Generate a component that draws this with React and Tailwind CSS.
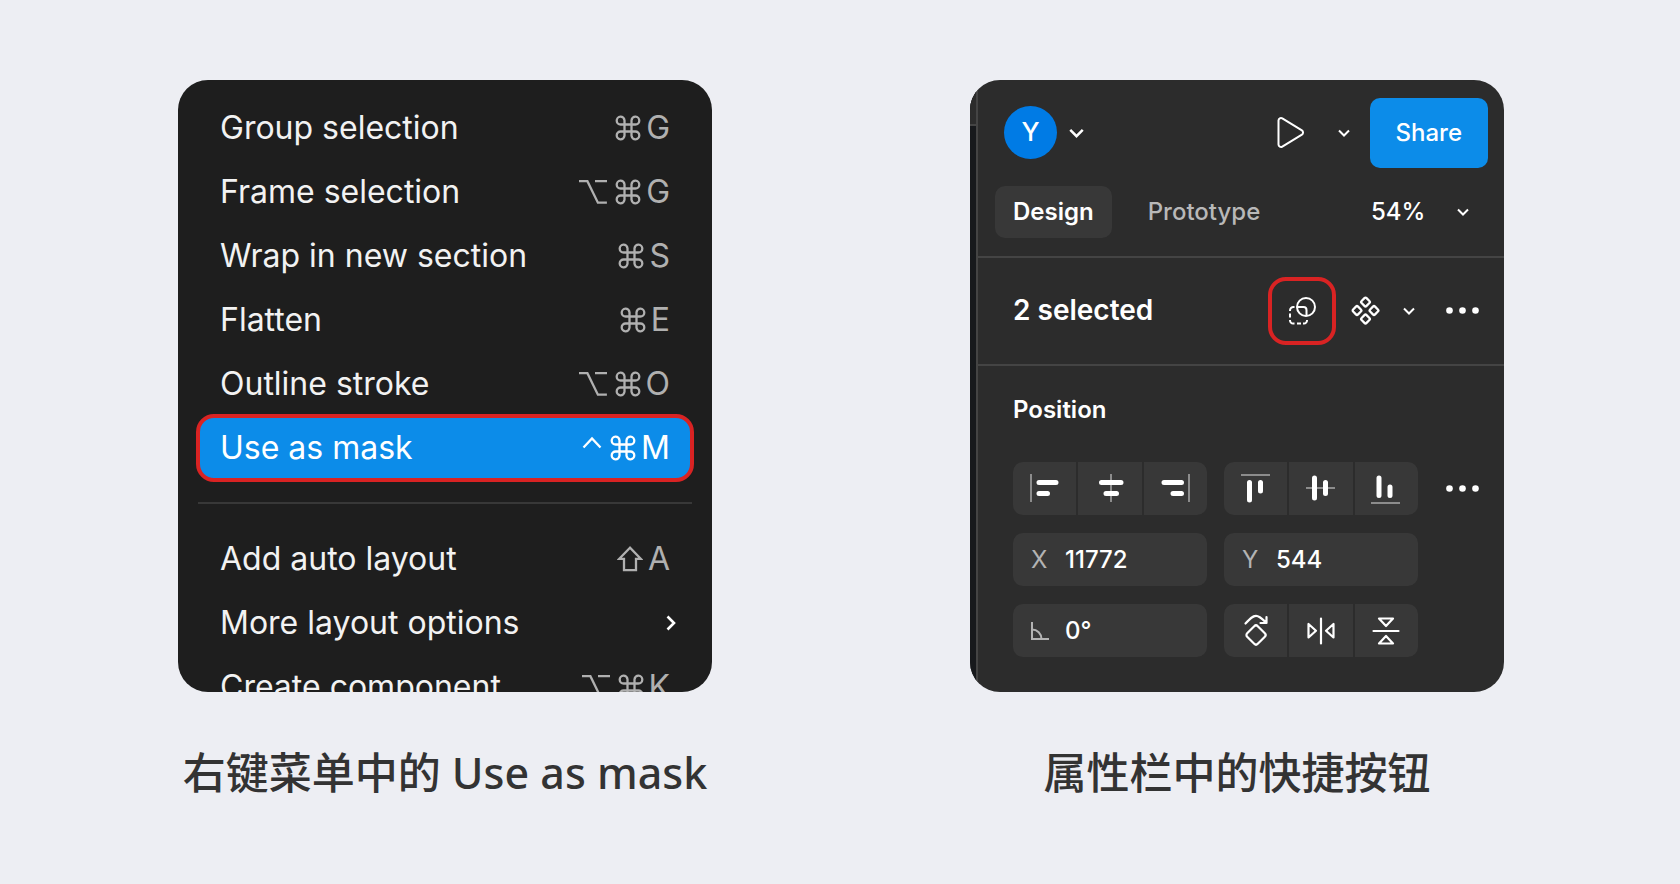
import React, { useState } from 'react';
import clsx from 'clsx';

const MENU_TOP = [
  { label: 'Group selection', keys: ['⌘', 'G'] },
  { label: 'Frame selection', keys: ['⌥', '⌘', 'G'] },
  { label: 'Wrap in new section', keys: ['⌘', 'S'] },
  { label: 'Flatten', keys: ['⌘', 'E'] },
  { label: 'Outline stroke', keys: ['⌥', '⌘', 'O'] },
  { label: 'Use as mask', keys: ['⌃', '⌘', 'M'], active: true },
];

const MENU_BOTTOM = [
  { label: 'Add auto layout', keys: ['⇧', 'A'] },
  { label: 'More layout options', submenu: true },
  { label: 'Create component', keys: ['⌥', '⌘', 'K'], clipped: true },
];

// guide = thin grey line, bars = thick white strokes
const ALIGN_X = [
  { name: 'Align left', guide: 'M1 0v28', bars: 'M9 8.5h17M9 19.5h8.5' },
  { name: 'Align horizontal centers', guide: 'M16 0v28', bars: 'M6.5 8.5h19.5M11 19.5h10.5' },
  { name: 'Align right', guide: 'M29 0v28', bars: 'M4 8.5h17.5M13 19.5h8.5' },
];

const ALIGN_Y = [
  { name: 'Align top', guide: 'M0 1h29', bars: 'M8.5 8.5v17.5M19.5 8.5v8.5' },
  { name: 'Align vertical centers', guide: 'M0 14h29', bars: 'M8.5 4v20M19.5 8.5v11' },
  { name: 'Align bottom', guide: 'M0 29h29', bars: 'M8 4v17.5M19 13v8.5' },
];

function KeyGlyph({ name }) {
  const common = {
    viewBox: '0 0 28 26',
    className: 'h-[26px] w-7',
    fill: 'none',
    stroke: 'currentColor',
    strokeWidth: 2.3,
  };
  if (name === '⌘') {
    return (
      <svg {...common} viewBox="0 0 26 26" className="h-[26px] w-[26px]">
        <path d="M9.5 9.500V5.300a3.900 3.900 0 1 0-3.900 4.200h14.800a3.900 3.900 0 1 0-3.900-4.200v15.400a3.900 3.900 0 1 0 3.900-4.200H5.600a3.900 3.900 0 1 0 3.900 4.200z" />
      </svg>
    );
  }
  if (name === '⌥') {
    return (
      <svg {...common}>
        <path d="M0 2.2h8.4l10.5 21.5h9M16 2.2h12" />
      </svg>
    );
  }
  if (name === '⌃') {
    return (
      <svg {...common} viewBox="0 0 20 26" className="h-[26px] w-5">
        <path d="M1.5 12.5l8.500-9 8.500 9" />
      </svg>
    );
  }
  return (
    <svg {...common} viewBox="0 0 26 26" className="h-[26px] w-[26px]">
      <path d="M13 1.7L2.300 12.800h4.700v11.400h12V12.800h4.700z" />
    </svg>
  );
}

function Shortcut({ keys }) {
  return (
    <span className="flex items-center gap-2">
      {keys.map((key) => (
        /[A-Z]/.test(key)
          ? <span key={key} className="-ml-[3px]">{key}</span>
          : <KeyGlyph key={key} name={key} />
      ))}
    </span>
  );
}

function MenuItem({ item }) {
  return (
    <li className={clsx(item.clipped && 'h-[37px] overflow-hidden', item.active && '-mt-[2px]')}>
      <button
        type="button"
        className={clsx(
          'flex w-full items-center justify-between text-left text-[32px] leading-10',
          item.active
            ? 'h-[68px] rounded-[18px] border-4 border-[#d92323] bg-[#0c8ce9] px-5 text-white'
            : 'h-16 px-6 text-[#f2f2f2]'
        )}
      >
        <span>{item.label}</span>
        {item.keys && (
          <span className={item.active ? 'text-white' : 'text-[#b0b0b0]'}>
            <Shortcut keys={item.keys} />
          </span>
        )}
        {item.submenu && (
          <svg viewBox="0 0 10 16" className="-mr-[6px] h-4 w-[10px]" fill="none" stroke="white" strokeWidth="2.6">
            <path d="M1.5 1.5L8 8l-6.5 6.5" />
          </svg>
        )}
      </button>
    </li>
  );
}

function ContextMenu() {
  return (
    <div className="overflow-hidden rounded-[30px] bg-[#1e1e1e] px-[18px] pt-4">
      <ul>
        {MENU_TOP.map((item) => <MenuItem key={item.label} item={item} />)}
      </ul>
      <hr className="mx-[2px] mt-5 mb-[23px] border-t-2 border-[#383838]" />
      <ul>
        {MENU_BOTTOM.map((item) => <MenuItem key={item.label} item={item} />)}
      </ul>
    </div>
  );
}

function Chevron({ large }) {
  return (
    <svg
      viewBox="0 0 12 8"
      className={clsx('shrink-0', large ? 'h-[10px] w-[15px]' : 'h-2 w-3')}
      fill="none"
      stroke="currentColor"
      strokeWidth="2"
    >
      <path d="M1 1.5l5 5 5-5" />
    </svg>
  );
}

function Dots() {
  return (
    <svg viewBox="0 0 34 8" className="h-2 w-[34px]" fill="currentColor">
      <circle cx="3.500" cy="3.500" r="3.300" />
      <circle cx="16.500" cy="3.500" r="3.300" />
      <circle cx="29.500" cy="3.500" r="3.300" />
    </svg>
  );
}

function ButtonGroup({ children }) {
  return (
    <div className="flex h-[53px] flex-1 gap-[2px] overflow-hidden rounded-[10px]">
      {children}
    </div>
  );
}

function Cell({ name, children }) {
  return (
    <button type="button" aria-label={name} className="flex flex-1 items-center justify-center bg-[#383838]">
      {children}
    </button>
  );
}

function AlignCell({ item }) {
  return (
    <Cell name={item.name}>
      <svg viewBox="0 0 30 30" className="h-[30px] w-[30px]" fill="none">
        <path d={item.guide} stroke="#8c8c8c" strokeWidth="2" />
        <path d={item.bars} stroke="white" strokeWidth="5" strokeLinecap="round" />
      </svg>
    </Cell>
  );
}

function ActionIcon({ children }) {
  return (
    <svg
      viewBox="0 0 30 34"
      className="h-[34px] w-[30px]"
      fill="none"
      stroke="white"
      strokeWidth="2.2"
      strokeLinecap="round"
      strokeLinejoin="round"
    >
      {children}
    </svg>
  );
}

function Field({ name, icon, value, onChange }) {
  return (
    <label className="flex h-[53px] min-w-0 flex-1 items-center rounded-[10px] bg-[#383838]">
      <span className="flex w-[52px] shrink-0 pl-[18px] text-[#b3b3b3]">{icon}</span>
      <input
        type="text"
        aria-label={name}
        value={value}
        onChange={(e) => onChange(e.target.value)}
        className="w-full min-w-0 bg-transparent font-medium text-white outline-none"
      />
    </label>
  );
}

function PropertiesPanel() {
  const [position, setPosition] = useState({ x: '11772', y: '544', angle: '0°' });
  const update = (key) => (value) => setPosition({ ...position, [key]: value });

  return (
    <div className="flex overflow-hidden rounded-[30px] bg-[#2c2c2c] text-2xl text-white">
      <div className="w-[6px] shrink-0 bg-[#17191c]">
        <div className="h-[46px] border-b-2 border-[#444444] bg-[#2c2c2c]" />
      </div>

      <div className="min-w-0 flex-1 border-l-2 border-[#444444]">
        <div className="flex h-[88px] items-end justify-between pr-4 pl-[26px]">
          <button type="button" aria-label="Account" className="mb-[9px] flex items-center gap-3">
            <span className="flex h-[53px] w-[53px] items-center justify-center rounded-full bg-[#007be5] text-[26px] font-medium">
              Y
            </span>
            <Chevron large />
          </button>
          <div className="flex items-center">
            <button type="button" aria-label="Present">
              <svg viewBox="0 0 28 32" className="h-8 w-7" fill="none" stroke="currentColor" strokeWidth="2">
                <path d="M1.5 3.500v24a2.500 2.500 0 0 0 3.800 2.100l19.600-12a2.500 2.500 0 0 0 0-4.200L5.300 1.400A2.500 2.500 0 0 0 1.500 3.500z" />
              </svg>
            </button>
            <button type="button" aria-label="Present options" className="mr-5 ml-[33px]">
              <Chevron />
            </button>
            <button type="button" className="h-[70px] rounded-[10px] bg-[#0c8ce9] px-[26px] font-medium">
              Share
            </button>
          </div>
        </div>

        <div className="flex items-center border-b-2 border-[#444444] py-[18px] pr-[35px] pl-[17px]">
          <button type="button" className="h-[52px] rounded-[10px] bg-[#383838] px-[18px] font-semibold">
            Design
          </button>
          <button type="button" className="ml-[18px] px-[18px] font-medium text-[#b8b8b8]">Prototype</button>
          <label className="ml-auto flex items-center gap-[31px]">
            <select aria-label="Zoom" className="appearance-none bg-transparent font-medium outline-none">
              <option>54%</option>
            </select>
            <Chevron />
          </label>
        </div>

        <div className="flex h-[108px] items-center border-b-2 border-[#444444] pr-6 pl-[35px]">
          <h2 className="flex-1 text-[28px] font-semibold">2 selected</h2>
          <button
            type="button"
            aria-label="Use as mask"
            className="flex h-[68px] w-[68px] items-center justify-center rounded-[18px] border-4 border-[#d92323]"
          >
            <svg viewBox="0 0 28 28" className="h-7 w-7" fill="none" stroke="currentColor" strokeWidth="2">
              <circle cx="18" cy="10" r="9" />
              <path d="M9 10h6.500a3 3 0 0 1 3 3v6" />
              <path d="M6.500 10h-1a3.500 3.500 0 0 0-3.500 3.500v.5M2 16.500v4M2 23v.5a3 3 0 0 0 3 3h1.500M9 26.500h4M15 26.500h1a3 3 0 0 0 3-3v-.5" />
            </svg>
          </button>
          <button type="button" aria-label="Create component" className="ml-[15px]">
            <svg viewBox="0 0 30 30" className="h-[30px] w-[30px]" fill="none" stroke="currentColor" strokeWidth="2.300">
              {[[14.5, 6], [6, 14.5], [23, 14.5], [14.5, 23]].map(([cx, cy]) => (
                <rect
                  key={`${cx}-${cy}`}
                  x={cx - 3.5}
                  y={cy - 3.5}
                  width="7"
                  height="7"
                  rx="1.500"
                  transform={`rotate(45 ${cx} ${cy})`}
                />
              ))}
            </svg>
          </button>
          <button type="button" aria-label="Component options" className="ml-[22px]">
            <Chevron />
          </button>
          <button type="button" aria-label="More actions" className="ml-[31px]">
            <Dots />
          </button>
        </div>

        <div className="pt-7 pr-6 pb-[35px] pl-[35px]">
          <h3 className="mb-9 leading-8 font-semibold">Position</h3>
          <div className="flex flex-col gap-[18px]">
            <div className="flex items-center gap-[17px]">
              <ButtonGroup>
                {ALIGN_X.map((item) => <AlignCell key={item.name} item={item} />)}
              </ButtonGroup>
              <ButtonGroup>
                {ALIGN_Y.map((item) => <AlignCell key={item.name} item={item} />)}
              </ButtonGroup>
              <button type="button" aria-label="More align options" className="ml-[11px]">
                <Dots />
              </button>
            </div>

            <div className="flex gap-[17px] pr-[62px]">
              <Field name="X position" icon="X" value={position.x} onChange={update('x')} />
              <Field name="Y position" icon="Y" value={position.y} onChange={update('y')} />
            </div>

            <div className="flex gap-[17px] pr-[62px]">
              <Field
                name="Rotation"
                icon={(
                  <svg viewBox="0 0 18 18" className="h-[18px] w-[18px]" fill="none" stroke="currentColor" strokeWidth="2">
                    <path d="M1 0v17h17M1 7.500a9.500 9.500 0 0 1 9.500 9.500" />
                  </svg>
                )}
                value={position.angle}
                onChange={update('angle')}
              />
              <ButtonGroup>
                <Cell name="Rotate 90° right">
                  <ActionIcon>
                    <rect x="7.500" y="13.500" width="15" height="15" rx="2.500" transform="rotate(45 15 21)" />
                    <path d="M4.500 9.500C9 4.500 11.500 1.800 15 1.800s6 2.700 10 6.700M25.500 3v6h-6" />
                  </ActionIcon>
                </Cell>
                <Cell name="Flip horizontal">
                  <ActionIcon>
                    <path d="M15 4.500v25M2.500 10v13.500l7.500-6.800zM27.500 10v13.500l-7.500-6.800z" />
                  </ActionIcon>
                </Cell>
                <Cell name="Flip vertical">
                  <ActionIcon>
                    <path d="M2.500 17h25M8 4.500h14l-7 7.500zM8 29.500h14l-7-7.500z" />
                  </ActionIcon>
                </Cell>
              </ButtonGroup>
            </div>
          </div>
        </div>
      </div>
    </div>
  );
}

function Figure({ caption, children }) {
  return (
    <figure className="min-w-0 max-w-[534px] flex-1">
      {children}
      <figcaption className="mt-[51px] text-center font-['Noto_Sans','Noto_Sans_CJK_SC',sans-serif] text-[43px] leading-[60px] font-medium whitespace-nowrap text-[#333333]">
        {caption}
      </figcaption>
    </figure>
  );
}

export default function App() {
  return (
    <main className="flex min-h-screen items-start justify-center gap-[258px] bg-[#edeef3] pt-20 pl-[2px] font-['Inter',sans-serif]">
      <Figure caption="右键菜单中的 Use as mask">
        <ContextMenu />
      </Figure>
      <Figure caption="属性栏中的快捷按钮">
        <PropertiesPanel />
      </Figure>
    </main>
  );
}
